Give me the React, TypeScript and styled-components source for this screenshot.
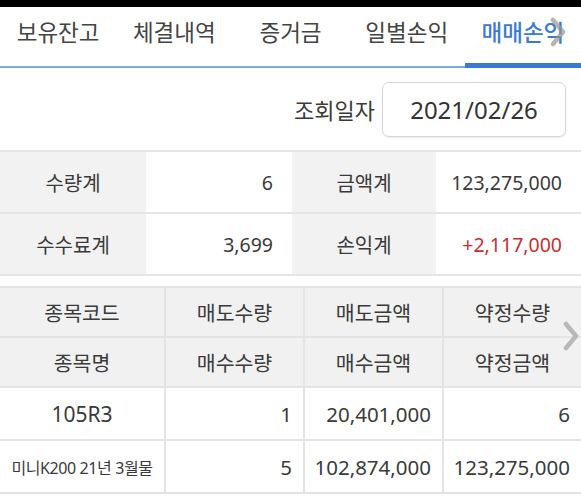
import styled, { createGlobalStyle } from 'styled-components';

const GlobalStyle = createGlobalStyle`
	html, body {
		margin: 0;
		padding: 0;
		background: #ffffff;
	}
	body {
		font-family: 'Noto Sans', 'Noto Sans CJK KR', sans-serif;
		color: #3a3a3a;
	}
`;

const tabs = ['보유잔고', '체결내역', '증거금', '일별손익', '매매손익'];

const summary = [
	{ label: '수량계', value: '6', label2: '금액계', value2: '123,275,000' },
	{ label: '수수료계', value: '3,699', label2: '손익계', value2: '+2,117,000', up: true },
];

const headers = [
	['종목코드', '매도수량', '매도금액', '약정수량'],
	['종목명', '매수수량', '매수금액', '약정금액'],
];

const rows = [
	{ name: '105R3', a: '1', b: '20,401,000', c: '6' },
	{ name: '미니K200 21년 3월물', a: '5', b: '102,874,000', c: '123,275,000', small: true },
];

export default function App() {
	return (
		<>
			<GlobalStyle />
			<StyledScreen>
				<StyledStatusBar />
				<StyledTabBar>
					{tabs.map((tab, index) => (
						<StyledTab key={tab} $active={index === tabs.length - 1}>
							{tab}
						</StyledTab>
					))}
					<StyledTabArrow>
						<Chevron />
					</StyledTabArrow>
				</StyledTabBar>

				<StyledDateRow>
					<StyledDateLabel>조회일자</StyledDateLabel>
					<StyledDateBox>2021/02/26</StyledDateBox>
				</StyledDateRow>

				<StyledSummary>
					{summary.map((row) => (
						<StyledSummaryRow key={row.label}>
							<StyledSummaryLabel>{row.label}</StyledSummaryLabel>
							<StyledSummaryValue>{row.value}</StyledSummaryValue>
							<StyledSummaryLabel>{row.label2}</StyledSummaryLabel>
							<StyledSummaryValue $up={row.up}>{row.value2}</StyledSummaryValue>
						</StyledSummaryRow>
					))}
				</StyledSummary>

				<StyledTableWrap>
					<StyledTable>
						{headers.map((cells) => (
							<StyledRow key={cells[0]} $head>
								{cells.map((cell) => (
									<StyledHeadCell key={cell}>{cell}</StyledHeadCell>
								))}
							</StyledRow>
						))}
						{rows.map((row) => (
							<StyledRow key={row.name}>
								<StyledNameCell $small={row.small}>{row.name}</StyledNameCell>
								<StyledNumCell>{row.a}</StyledNumCell>
								<StyledNumCell>{row.b}</StyledNumCell>
								<StyledNumCell>{row.c}</StyledNumCell>
							</StyledRow>
						))}
					</StyledTable>
					<StyledTableArrow>
						<Chevron />
					</StyledTableArrow>
				</StyledTableWrap>
			</StyledScreen>
		</>
	);
}

const Chevron = () => (
	<svg width="16" height="30" viewBox="0 0 16 30" fill="none">
		<path d="M3 3 L13 15 L3 27" stroke="currentColor" strokeWidth="4.5" strokeLinecap="round" strokeLinejoin="round" />
	</svg>
);

const StyledScreen = styled.div`
	width: 581px;
	height: 496px;
	overflow: hidden;
	background: #ffffff;
`;

const StyledStatusBar = styled.div`
	height: 7px;
	background: #000000;
`;

const StyledTabBar = styled.div`
	position: relative;
	display: grid;
	grid-template-columns: repeat(5, 1fr);
	height: 59px;
	border-bottom: 2px solid #7fa9de;
`;

const StyledTab = styled.div<{ $active?: boolean }>`
	display: flex;
	justify-content: center;
	padding-top: 8px;
	font-family: 'Noto Sans CJK KR', sans-serif;
	font-size: 22.5px;
	line-height: 32px;
	white-space: nowrap;
	color: ${({ $active }) => ($active ? '#3a7bd0' : '#444444')};
	font-weight: ${({ $active }) => ($active ? 500 : 400)};
	box-shadow: ${({ $active }) => ($active ? 'inset 0 -5px 0 #3a7bd0' : 'none')};
	margin-bottom: ${({ $active }) => ($active ? '-2px' : '0')};
`;

const StyledTabArrow = styled.div`
	position: absolute;
	left: 550px;
	top: 10px;
	color: rgba(150, 150, 150, 0.7);
`;

const StyledDateRow = styled.div`
	display: flex;
	align-items: center;
	justify-content: flex-end;
	gap: 7px;
	height: 82px;
	padding-right: 15px;
`;

const StyledDateLabel = styled.span`
	font-family: 'Noto Sans CJK KR', sans-serif;
	font-size: 22px;
	color: #3a3a3a;
`;

const StyledDateBox = styled.div`
	box-sizing: border-box;
	width: 184px;
	height: 55px;
	display: flex;
	align-items: center;
	justify-content: center;
	border: 1px solid #d6d6d6;
	border-radius: 7px;
	box-shadow: 0 1px 2px rgba(0, 0, 0, 0.08);
	font-size: 24px;
	color: #333333;
`;

const StyledSummary = styled.div`
	border-top: 2px solid #e6e6e6;
	border-bottom: 2px solid #e6e6e6;
`;

const StyledSummaryRow = styled.div`
	display: grid;
	grid-template-columns: 146px 146px 144px 145px;
	height: 60px;
	& + & {
		border-top: 2px solid #e6e6e6;
	}
`;

const StyledSummaryLabel = styled.div`
	display: flex;
	align-items: center;
	justify-content: center;
	background: #f2f2f2;
	font-family: 'Noto Sans CJK KR', sans-serif;
	font-size: 20px;
	color: #3a3a3a;
`;

const StyledSummaryValue = styled.div<{ $up?: boolean }>`
	display: flex;
	align-items: center;
	justify-content: flex-end;
	padding-right: 19px;
	font-size: 19.5px;
	color: ${({ $up }) => ($up ? '#c62f2f' : '#3a3a3a')};
`;

const StyledTableWrap = styled.div`
	position: relative;
	margin-top: 10px;
`;

const StyledTable = styled.div`
	border-top: 2px solid #e4e4e4;
`;

const StyledRow = styled.div<{ $head?: boolean }>`
	display: grid;
	grid-template-columns: 164px 139px 139px 139px;
	height: ${({ $head }) => ($head ? '48px' : '51px')};
	background: ${({ $head }) => ($head ? '#f1f1f1' : '#ffffff')};
	border-bottom: 2px solid #e4e4e4;
	& > * + * {
		border-left: 2px solid #e4e4e4;
	}
`;

const StyledHeadCell = styled.div`
	display: flex;
	align-items: center;
	justify-content: center;
	font-family: 'Noto Sans CJK KR', sans-serif;
	font-size: 20.5px;
	color: #3a3a3a;
`;

const StyledNameCell = styled.div<{ $small?: boolean }>`
	display: flex;
	align-items: center;
	justify-content: center;
	font-family: 'Noto Sans', 'Noto Sans CJK KR', sans-serif;
	font-size: ${({ $small }) => ($small ? '16px' : '21px')};
	letter-spacing: ${({ $small }) => ($small ? '-0.4px' : '0')};
	color: #3a3a3a;
	white-space: nowrap;
`;

const StyledNumCell = styled.div`
	display: flex;
	align-items: center;
	justify-content: flex-end;
	padding-right: 11px;
	font-size: 20.5px;
	color: #3a3a3a;
`;

const StyledTableArrow = styled.div`
	position: absolute;
	right: 2px;
	top: 35px;
	color: #b8b8b8;
`;
